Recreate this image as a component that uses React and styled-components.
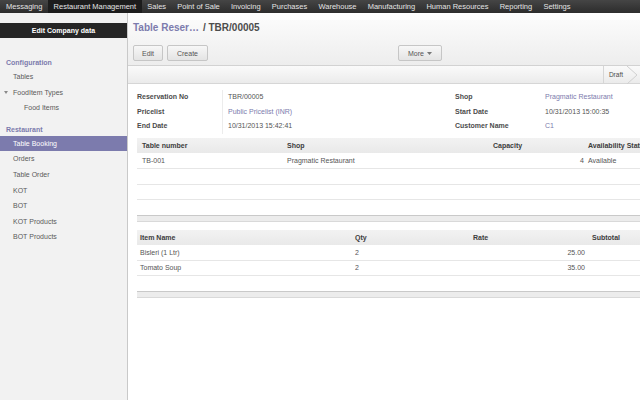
import React from "react";
import styled, { createGlobalStyle } from "styled-components";

const Global = createGlobalStyle`
  html, body {
    margin: 0;
    padding: 0;
    width: 640px;
    height: 400px;
    overflow: hidden;
    background: #fff;
    font-family: "Liberation Sans", Arial, sans-serif;
    color: #555;
  }
  * { box-sizing: border-box; }
`;

const purple = "#7c7bad";

const Page = styled.div`
  display: flex;
  flex-direction: column;
  width: 640px;
  height: 400px;
`;

const TopBar = styled.div`
  display: flex;
  height: 13px;
  padding-left: 0.5px;
  background: linear-gradient(#454545, #2c2c2c);
  flex-shrink: 0;
`;

const MenuItem = styled.div`
  display: flex;
  align-items: center;
  padding: 0 5.6px;
  font-size: 7.5px;
  color: #e4e4e4;
  white-space: nowrap;
  background: ${(p) => (p.$active ? "#1c1c1c" : "transparent")};
`;

const Body = styled.div`
  display: flex;
  flex: 1;
  min-height: 0;
`;

const Sidebar = styled.div`
  width: 128px;
  flex-shrink: 0;
  background: #f2f2f2;
  border-right: 1px solid #c9c9c9;
  padding-top: 10px;
`;

const EditBar = styled.div`
  height: 15px;
  background: #262626;
  color: #fff;
  font-size: 7px;
  font-weight: bold;
  display: flex;
  align-items: center;
  justify-content: center;
`;

const MenuHead = styled.div`
  height: 12px;
  line-height: 12px;
  margin-top: ${(p) => p.$gap}px;
  padding-left: 6px;
  font-size: 7px;
  font-weight: bold;
  color: ${purple};
`;

const MenuRow = styled.div`
  height: 15.6px;
  line-height: 15.6px;
  padding-left: ${(p) => p.$indent}px;
  font-size: 7px;
  color: ${(p) => (p.$active ? "#fff" : "#5a5a5a")};
  background: ${(p) => (p.$active ? purple : "transparent")};
  white-space: nowrap;
  position: relative;
`;

const Caret = styled.svg`
  position: absolute;
  left: 4px;
  top: 6.5px;
`;

const Main = styled.div`
  flex: 1;
  min-width: 0;
  overflow: hidden;
  display: flex;
  flex-direction: column;
`;

const Header = styled.div`
  height: 53px;
  padding: 8px 0 0 5px;
  background: linear-gradient(#fdfdfd, #ededed);
  border-bottom: 1px solid #d2d2d2;
`;

const Title = styled.div`
  height: 14px;
  line-height: 14px;
  font-size: 10px;
  font-weight: bold;
  white-space: nowrap;
`;

const Crumb = styled.span`
  color: ${purple};
`;

const Current = styled.span`
  color: #4c4c4c;
  margin-left: 4px;
`;

const ButtonRow = styled.div`
  display: grid;
  grid-template-columns: 265px auto;
  margin-top: 10px;
`;

const Group = styled.div`
  display: flex;
  gap: 4px;
`;

const Button = styled.div`
  height: 16px;
  width: ${(p) => p.$w}px;
  display: flex;
  align-items: center;
  justify-content: center;
  border: 1px solid #c6c6c6;
  border-radius: 2px;
  background: linear-gradient(#f7f7f7, #e4e4e4);
  font-size: 7px;
  color: #555;
  white-space: nowrap;
`;

const Arrow = styled.svg`
  margin-left: 3px;
`;

const StatusBar = styled.div`
  height: 18px;
  display: flex;
  justify-content: flex-end;
  background: linear-gradient(#fafafa, #ebebeb);
  border-bottom: 1px solid #d6d6d6;
`;

const Stage = styled.div`
  display: flex;
  align-items: center;
  padding: 0 17px 0 5px;
  border-left: 1px solid #d6d6d6;
  font-size: 6.5px;
  color: #4c4c4c;
  position: relative;
`;

const Chevron = styled.svg`
  position: absolute;
  right: 1px;
  top: 0;
`;

const Sheet = styled.div`
  padding: 6px 0 0 9px;
`;

const FormGrid = styled.div`
  display: grid;
  grid-template-columns: 85px 233px 90px 200px;
  grid-auto-rows: 14.7px;
`;

const Label = styled.div`
  font-size: 7px;
  font-weight: bold;
  color: #4c4c4c;
  line-height: 14.7px;
  white-space: nowrap;
`;

const Value = styled.div`
  font-size: 7px;
  line-height: 14.7px;
  padding-left: ${(p) => (p.$sep ? 5 : 0)}px;
  border-left: ${(p) => (p.$sep ? "1px solid #ececec" : "none")};
  color: ${(p) => (p.$link ? purple : "#555")};
  white-space: nowrap;
`;

const Table = styled.table`
  border-collapse: collapse;
  table-layout: fixed;
  width: ${(p) => p.$w}px;
  margin-top: ${(p) => p.$top}px;
  font-size: 7px;
`;

const Th = styled.th`
  height: 15px;
  padding: 0 0 0 ${(p) => p.$pl ?? 5}px;
  text-align: left;
  font-weight: bold;
  color: #3c3c3c;
  background: linear-gradient(#f2f2f2, #e9e9e9);
  white-space: nowrap;
  overflow: hidden;
`;

const Td = styled.td`
  height: 15.5px;
  padding: 0 ${(p) => p.$pr ?? 0}px 0 ${(p) => p.$pl ?? 5}px;
  text-align: ${(p) => (p.$right ? "right" : "left")};
  color: #555;
  border-bottom: ${(p) => (p.$plain ? "none" : "1px solid #e6e6e6")};
  white-space: nowrap;
  overflow: hidden;
`;

const Foot = styled.td`
  height: 6px;
  padding: 0;
  background: #ececec;
  border-top: 1px solid #c9c9c9;
  border-bottom: 1px solid #d9d9d9;
`;

const menus = [
  "Messaging",
  "Restaurant Management",
  "Sales",
  "Point of Sale",
  "Invoicing",
  "Purchases",
  "Warehouse",
  "Manufacturing",
  "Human Resources",
  "Reporting",
  "Settings",
];

const restaurantItems = [
  "Table Booking",
  "Orders",
  "Table Order",
  "KOT",
  "BOT",
  "KOT Products",
  "BOT Products",
];

const tableCols = [145, 206, 98, 120];
const itemCols = [215, 116, 120, 120];

const App = () => {
  return (
    <Page>
      <Global />
      <TopBar>
        {menus.map((m) => (
          <MenuItem key={m} $active={m === "Restaurant Management"}>
            {m}
          </MenuItem>
        ))}
      </TopBar>
      <Body>
        <Sidebar>
          <EditBar>Edit Company data</EditBar>
          <MenuHead $gap={19}>Configuration</MenuHead>
          <MenuRow $indent={13}>Tables</MenuRow>
          <MenuRow $indent={13}>
            <Caret width="4" height="3" viewBox="0 0 4 3">
              <polygon points="0,0 4,0 2,3" fill="#8a8a8a" />
            </Caret>
            FoodItem Types
          </MenuRow>
          <MenuRow $indent={24}>Food Items</MenuRow>
          <MenuHead $gap={8}>Restaurant</MenuHead>
          {restaurantItems.map((it, i) => (
            <MenuRow key={it} $indent={13} $active={i === 0}>
              {it}
            </MenuRow>
          ))}
        </Sidebar>
        <Main>
          <Header>
            <Title>
              <Crumb>Table Reser…</Crumb>
              <Current>/ TBR/00005</Current>
            </Title>
            <ButtonRow>
              <Group>
                <Button $w={30}>Edit</Button>
                <Button $w={41}>Create</Button>
              </Group>
              <Button $w={44}>
                More
                <Arrow width="5" height="3" viewBox="0 0 5 3">
                  <polygon points="0,0 5,0 2.5,3" fill="#777" />
                </Arrow>
              </Button>
            </ButtonRow>
          </Header>
          <StatusBar>
            <Stage>
              Draft
              <Chevron width="13" height="18" viewBox="0 0 13 18">
                <polyline points="1,0 11,9 1,18" fill="none" stroke="#d0d0d0" strokeWidth="1" />
              </Chevron>
            </Stage>
          </StatusBar>
          <Sheet>
            <FormGrid>
              <Label>Reservation No</Label>
              <Value $sep>TBR/00005</Value>
              <Label>Shop</Label>
              <Value $link>Pragmatic Restaurant</Value>
              <Label>Pricelist</Label>
              <Value $sep $link>Public Pricelist (INR)</Value>
              <Label>Start Date</Label>
              <Value>10/31/2013 15:00:35</Value>
              <Label>End Date</Label>
              <Value $sep>10/31/2013 15:42:41</Value>
              <Label>Customer Name</Label>
              <Value $link>C1</Value>
            </FormGrid>
            <Table $w={569} $top={4}>
              <colgroup>
                {tableCols.map((w, i) => (
                  <col key={i} style={{ width: w }} />
                ))}
              </colgroup>
              <thead>
                <tr>
                  <Th>Table number</Th>
                  <Th>Shop</Th>
                  <Th>Capacity</Th>
                  <Th $pl={2}>Availability Status</Th>
                </tr>
              </thead>
              <tbody>
                <tr>
                  <Td>TB-001</Td>
                  <Td>Pragmatic Restaurant</Td>
                  <Td $right $pr={2}>4</Td>
                  <Td $pl={2}>Available</Td>
                </tr>
                {[0, 1, 2].map((r) => (
                  <tr key={r}>
                    <Td $plain={r === 2} />
                    <Td $plain={r === 2} />
                    <Td $plain={r === 2} />
                    <Td $plain={r === 2} />
                  </tr>
                ))}
                <tr>
                  <Foot colSpan={4} />
                </tr>
              </tbody>
            </Table>
            <Table $w={571} $top={8}>
              <colgroup>
                {itemCols.map((w, i) => (
                  <col key={i} style={{ width: w }} />
                ))}
              </colgroup>
              <thead>
                <tr>
                  <Th $pl={3}>Item Name</Th>
                  <Th $pl={3}>Qty</Th>
                  <Th $pl={5}>Rate</Th>
                  <Th $pl={4}>Subtotal</Th>
                </tr>
              </thead>
              <tbody>
                <tr>
                  <Td $pl={3}>Bisleri (1 Ltr)</Td>
                  <Td $pl={3}>2</Td>
                  <Td $right $pr={3}>25.00</Td>
                  <Td />
                </tr>
                <tr>
                  <Td $pl={3}>Tomato Soup</Td>
                  <Td $pl={3}>2</Td>
                  <Td $right $pr={3}>35.00</Td>
                  <Td />
                </tr>
                <tr>
                  <Td $plain />
                  <Td $plain />
                  <Td $plain />
                  <Td $plain />
                </tr>
                <tr>
                  <Foot colSpan={4} />
                </tr>
              </tbody>
            </Table>
          </Sheet>
        </Main>
      </Body>
    </Page>
  );
};

export default App;
